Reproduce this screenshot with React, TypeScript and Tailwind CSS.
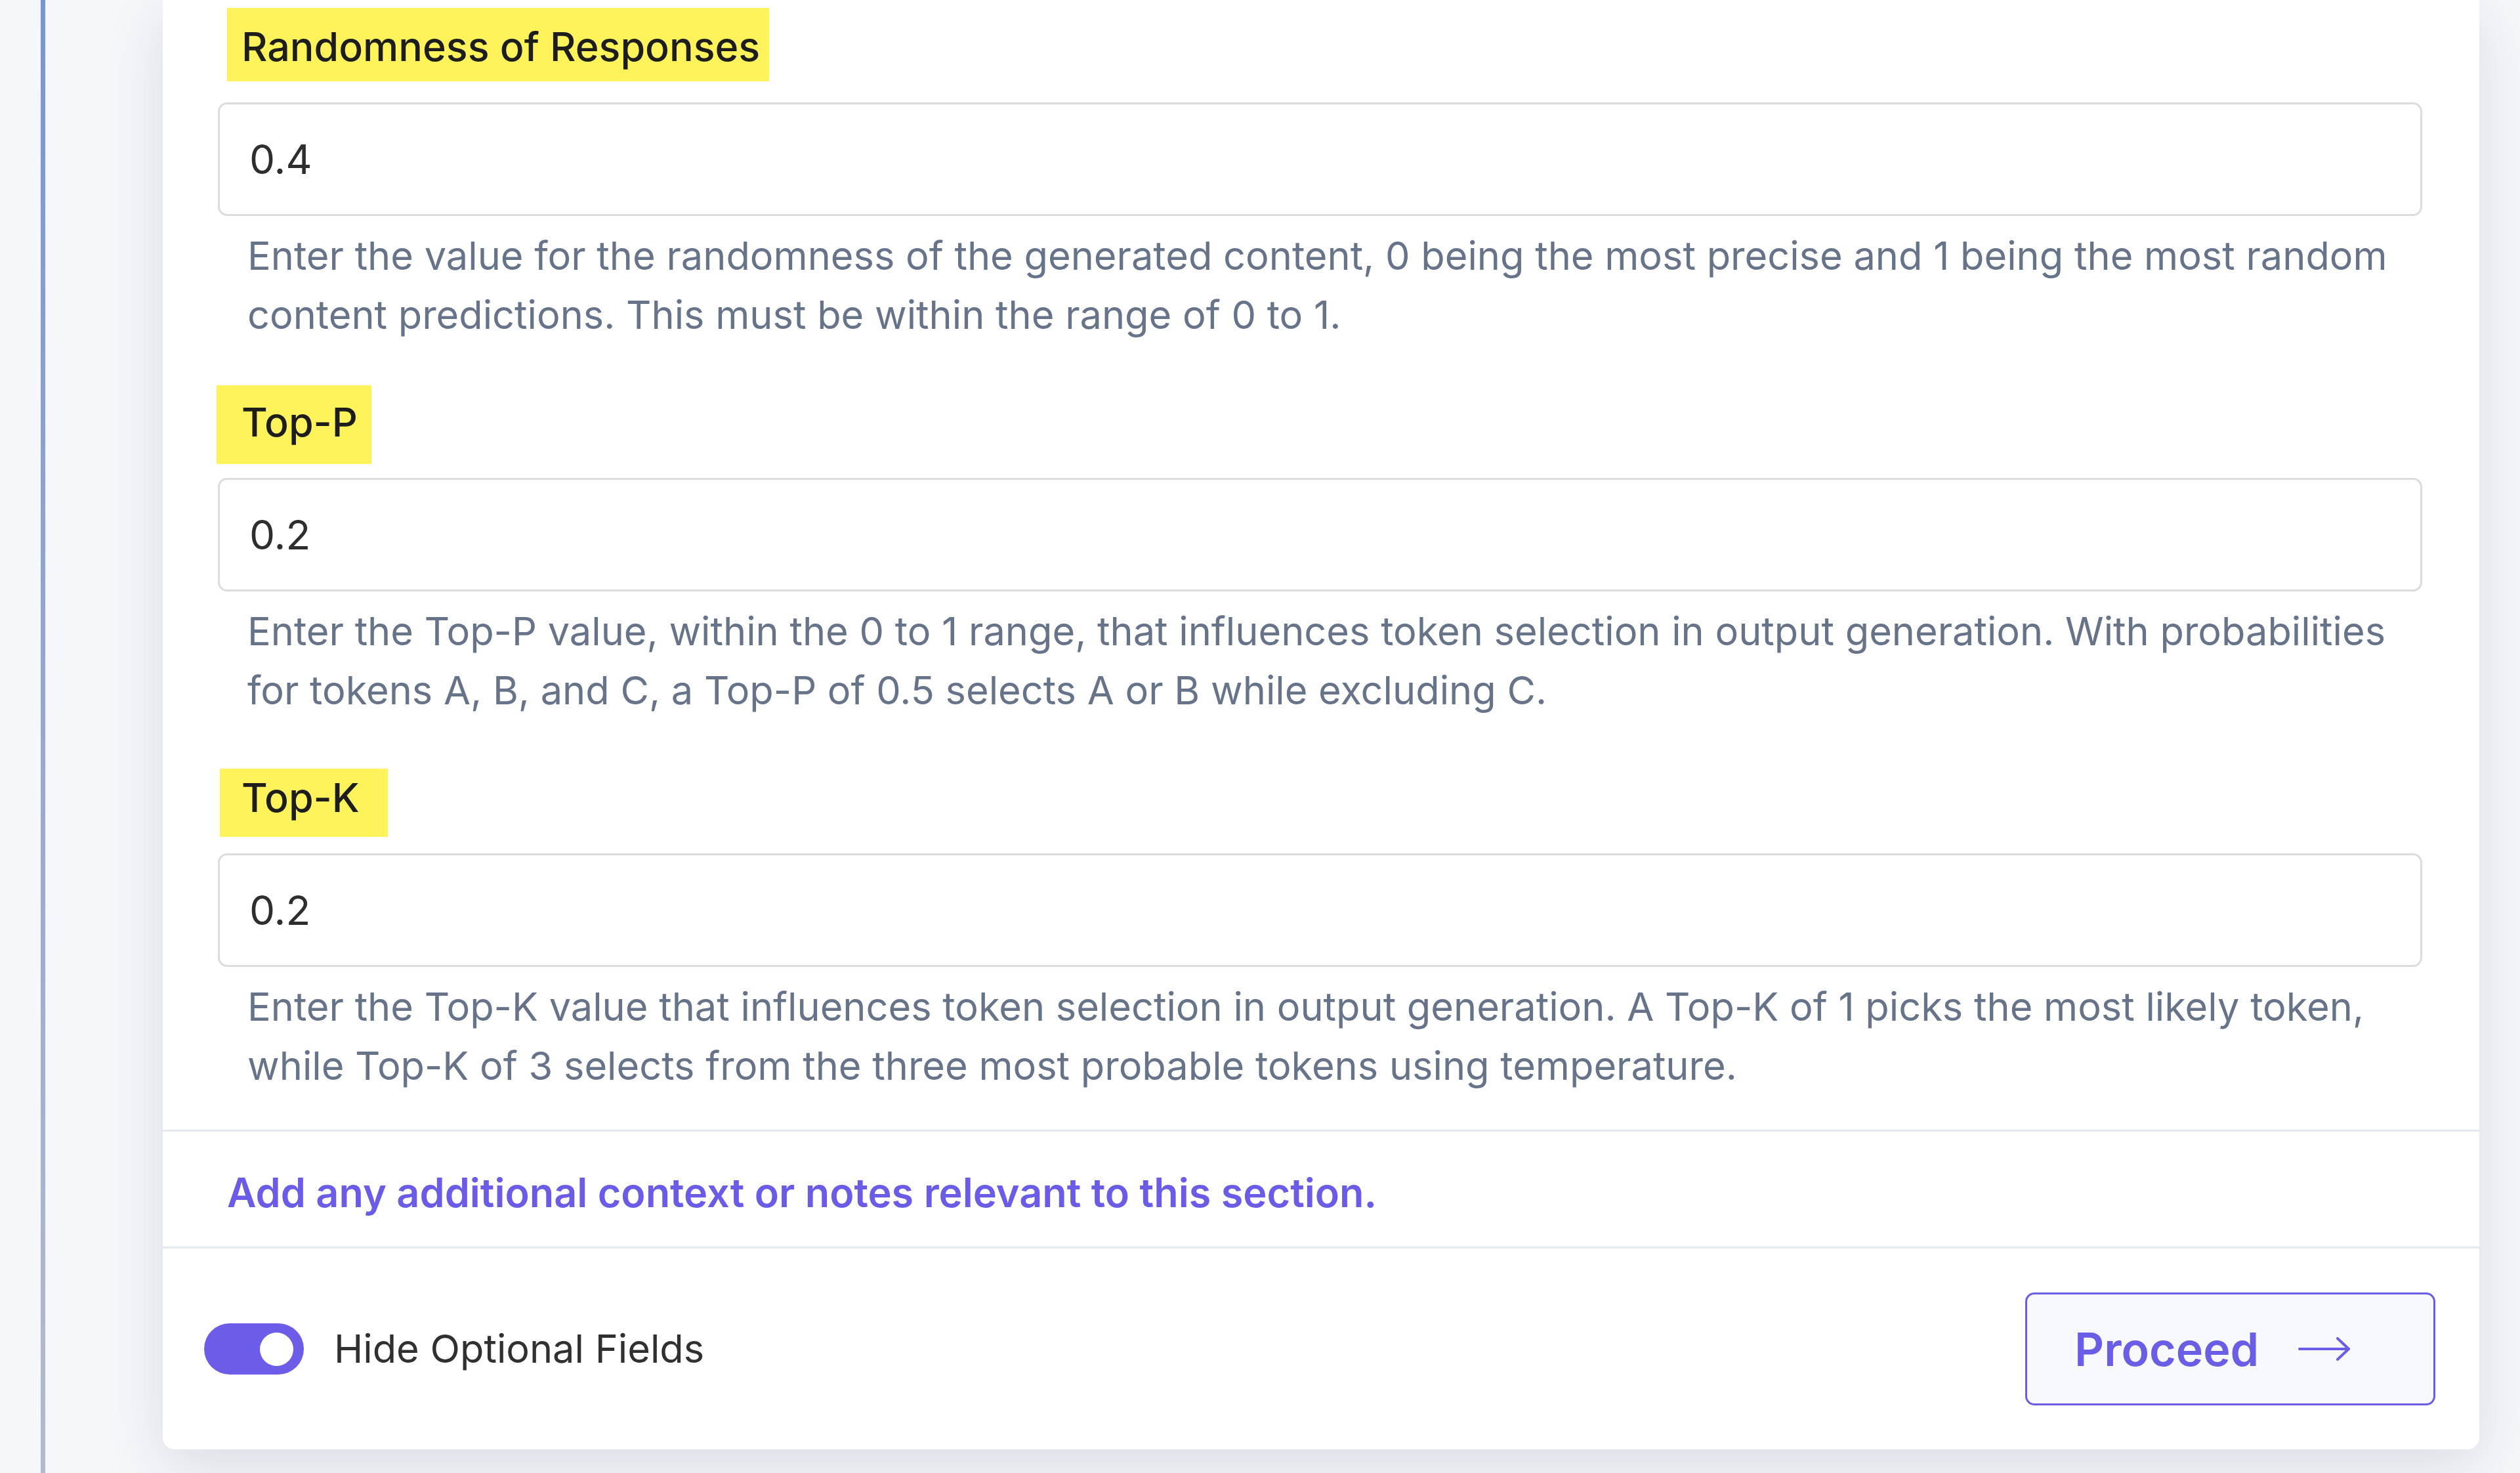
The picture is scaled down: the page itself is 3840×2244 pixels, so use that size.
import { useState } from 'react';

type Field = {
  label: string;
  value: string;
  hint: string;
  // yellow marker around the label; padding is cancelled by negative margin so the text stays on the grid
  marker: string;
};

const fields: Field[] = [
  {
    label: 'Randomness of Responses',
    value: '0.4',
    hint: 'Enter the value for the randomness of the generated content, 0 being the most precise and 1 being the most random content predictions. This must be within the range of 0 to 1.',
    marker: 'pl-[22px] -ml-[22px] pr-[14px] pt-[29px] -mt-[29px] pb-[23px] -mb-[23px]',
  },
  {
    label: 'Top-P',
    value: '0.2',
    hint: 'Enter the Top-P value, within the 0 to 1 range, that influences token selection in output generation. With probabilities for tokens A, B, and C, a Top-P of 0.5 selects A or B while excluding C.',
    marker: 'pl-[38px] -ml-[38px] pr-[21px] pt-[26px] -mt-[26px] pb-[34px] -mb-[34px]',
  },
  {
    label: 'Top-K',
    value: '0.2',
    hint: 'Enter the Top-K value that influences token selection in output generation. A Top-K of 1 picks the most likely token, while Top-K of 3 selects from the three most probable tokens using temperature.',
    marker: 'pl-[33px] -ml-[33px] pr-[43px] pt-[14px] -mt-[14px] pb-[30px] -mb-[30px]',
  },
];

function FieldBlock({ field, first }: { field: Field; first: boolean }) {
  return (
    <div className={first ? '' : 'mt-[89px]'}>
      <div className="ml-[36px] flex">
        <span
          className={`block w-fit bg-[#fff35c] text-[61px] leading-[60px] font-medium text-[#1d1d1b] ${field.marker}`}
        >
          {field.label}
        </span>
      </div>
      <input
        readOnly
        value={field.value}
        className="mt-[55px] block h-[173px] w-full rounded-[14px] border-[3px] border-[#dcdcdc] bg-white pl-[45px] text-[62px] text-[#2e2e2e] outline-none"
      />
      <p className="mt-[15px] pl-[45px] text-[59.5px] leading-[90px] text-[#667389]">
        {field.hint}
      </p>
    </div>
  );
}

function Toggle({ on, onChange }: { on: boolean; onChange: (v: boolean) => void }) {
  return (
    <button
      type="button"
      onClick={() => onChange(!on)}
      className={`flex h-[78px] w-[152px] items-center rounded-full px-[16px] ${
        on ? 'justify-end bg-[#6c5ce7]' : 'justify-start bg-[#cbd5e1]'
      }`}
    >
      <span className="block h-[51px] w-[51px] rounded-full bg-white" />
    </button>
  );
}

export default function App() {
  const [hideOptional, setHideOptional] = useState(true);

  return (
    <div className="flex h-[2244px] w-full overflow-hidden bg-[#f5f7fb] font-['Inter',sans-serif]">
      {/* step rail */}
      <div className="ml-[62px] w-[7px] shrink-0 bg-linear-to-b from-[#7b95d4] via-[#98a8cf] to-[#b3bccd]" />

      <div className="mr-[62px] ml-[179px] flex-1 self-start rounded-b-[18px] bg-white shadow-[0_24px_90px_rgba(30,41,59,0.13)]">
        <div className="pt-[41px] pr-[87px] pb-[53px] pl-[84px]">
          {fields.map((f, i) => (
            <FieldBlock key={f.label} field={f} first={i === 0} />
          ))}
        </div>

        <div className="border-t-[3px] border-[#e3e8f1] pt-[48px] pb-[37px] pl-[98px]">
          <p className="text-[61.2px] leading-[90px] font-semibold text-[#6b5ce7]">
            Add any additional context or notes relevant to this section.
          </p>
        </div>

        <div className="flex items-center justify-between border-t-[3px] border-[#e3e8f1] py-[67px] pr-[67px] pl-[63px]">
          <div className="flex items-center gap-[46px]">
            <Toggle on={hideOptional} onChange={setHideOptional} />
            <span className="text-[59.5px] text-[#303030]">Hide Optional Fields</span>
          </div>

          <button
            type="button"
            className="flex h-[172px] w-[625px] items-center gap-[60px] rounded-[14px] border-[3px] border-[#6a5de6] bg-[#f8f8ff] pl-[72px] text-[70px] font-semibold text-[#6a5de6]"
          >
            Proceed
            <svg width="80" height="36" viewBox="0 0 80 36" fill="none" stroke="currentColor" strokeWidth="4" strokeLinecap="round" strokeLinejoin="round">
              <path d="M2 18H77" />
              <path d="M60 2l17 16-17 16" />
            </svg>
          </button>
        </div>
      </div>
    </div>
  );
}
